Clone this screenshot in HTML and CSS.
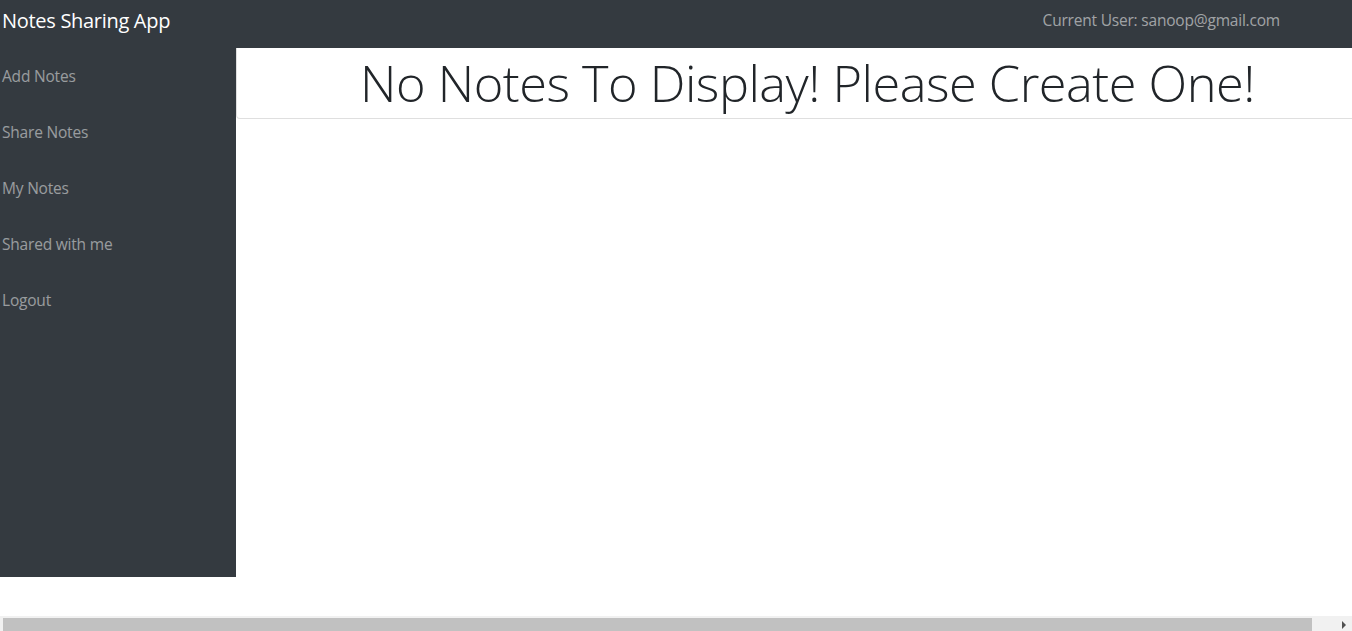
FILE: index.html
```html
<!DOCTYPE html>
<html lang="en">
<head>
<meta charset="utf-8">
<title>Notes Sharing App</title>
<link rel="stylesheet" href="styles.css">
</head>
<body>
<div class="page">
  <nav class="topbar">
    <a class="brand" href="#">Notes Sharing App</a>
    <span class="user">Current User: sanoop@gmail.com</span>
  </nav>
  <div class="layout">
    <aside class="sidebar">
      <a class="side-link" href="#">Add Notes</a>
      <a class="side-link" href="#">Share Notes</a>
      <a class="side-link" href="#">My Notes</a>
      <a class="side-link" href="#">Shared with me</a>
      <a class="side-link" href="#">Logout</a>
    </aside>
    <main class="content">
      <div class="card-head">
        <h1 class="display">No Notes To Display! Please Create One!</h1>
      </div>
    </main>
  </div>
</div>
<div class="hscroll" aria-hidden="true">
  <div class="hscroll-thumb"></div>
  <div class="hscroll-arrow"></div>
</div>
</body>
</html>
```
FILE: styles.css
```css
html, body {
  margin: 0;
  padding: 0;
  background: #fff;
}
body {
  font-family: "Open Sans", "Noto Sans", sans-serif;
  color: #212529;
}
.page {
  width: 1379px;
}
.topbar {
  height: 48px;
  background: #343a40;
  display: flex;
  align-items: flex-start;
  justify-content: space-between;
  padding: 0 99px 0 2px;
  box-sizing: border-box;
}
.brand {
  color: #fff;
  text-decoration: none;
  font-size: 20px;
  line-height: 30px;
  margin-top: 6px;
  letter-spacing: -0.3px;
}
.user {
  color: rgba(255,255,255,0.55);
  font-size: 15.5px;
  line-height: 24px;
  margin-top: 8px;
  letter-spacing: -0.2px;
}
.layout {
  display: flex;
  align-items: flex-start;
}
.sidebar {
  width: 236px;
  height: 529px;
  flex-shrink: 0;
  background: #343a40;
  display: flex;
  flex-direction: column;
}
.side-link {
  height: 56px;
  display: flex;
  align-items: center;
  padding-left: 2px;
  color: rgba(255,255,255,0.5);
  text-decoration: none;
  font-size: 15.5px;
  letter-spacing: -0.2px;
}
.content {
  flex: 1;
}
.card-head {
  border: 1px solid rgba(0,0,0,0.125);
  border-top: none;
  border-radius: 0 0 4px 4px;
  height: 71px;
  box-sizing: border-box;
  display: flex;
  align-items: center;
  justify-content: center;
}
.display {
  margin: 0;
  font-size: 50.5px;
  font-weight: 300;
  line-height: 1.2;
  letter-spacing: -0.5px;
}
.hscroll {
  position: fixed;
  left: 0;
  right: 0;
  bottom: 0;
  height: 15px;
  background: #f1f1f1;
  display: flex;
  align-items: center;
}
.hscroll-thumb {
  margin-left: 3px;
  width: 1309px;
  height: 13px;
  margin-top: 2px;
  background: #c1c1c1;
}
.hscroll-arrow {
  margin-left: auto;
  margin-right: 6px;
  width: 0;
  height: 0;
  border-top: 4px solid transparent;
  border-bottom: 4px solid transparent;
  border-left: 4px solid #505050;
  margin-top: 2px;
}
```
